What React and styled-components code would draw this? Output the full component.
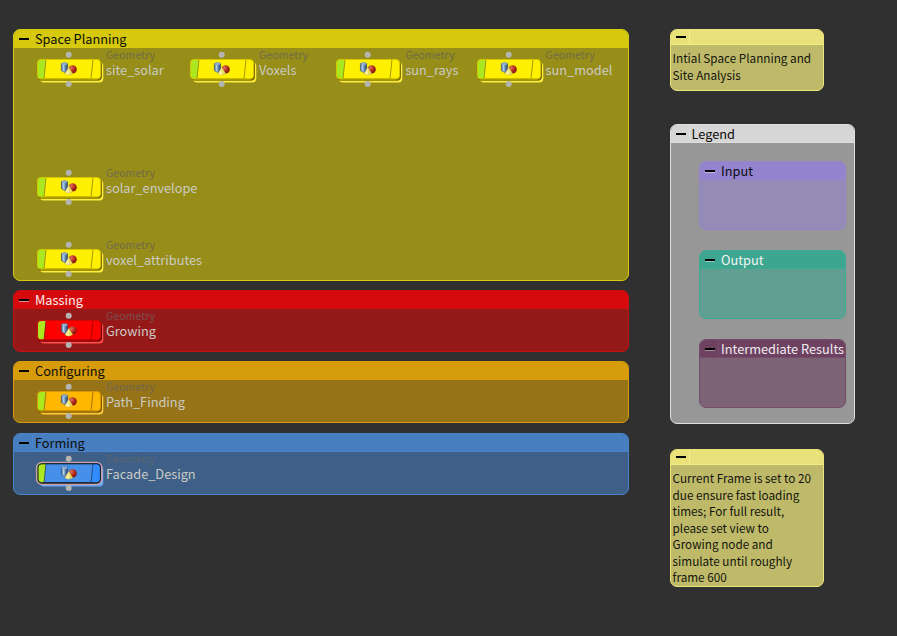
import React, { useId } from "react";
import styled, { createGlobalStyle } from "styled-components";

const GlobalStyle = createGlobalStyle`
  * { box-sizing: border-box; }
  body {
    margin: 0;
    background: #303030;
    font-family: "Noto Sans CJK SC", "Noto Sans", sans-serif;
  }
`;

const Canvas = styled.main`
  display: flex;
  align-items: flex-start;
  gap: 41px;
  width: 897px;
  height: 636px;
  padding: 29px 0 0 13px;
  background: #303030;
  overflow: hidden;
`;

const NetworkColumn = styled.div`
  display: flex;
  flex-direction: column;
  width: 615.6px;
`;

const NotesColumn = styled.div`
  display: flex;
  flex-direction: column;
  width: 185.3px;
`;

const Box = styled.section`
  width: ${(p) => (p.$width ? `${p.$width}px` : "100%")};
  height: ${(p) => p.$height}px;
  margin-top: ${(p) => p.$gap || 0}px;
  background: ${(p) => p.$fill};
  border: 1px solid ${(p) => p.$line};
  border-radius: 7px;
  overflow: hidden;
`;

const Header = styled.header`
  display: flex;
  height: ${(p) => p.$height || 18}px;
  background: ${(p) => p.$fill};
  border-bottom: 1px solid ${(p) => p.$line};
`;

const Toggle = styled.span`
  flex: none;
  width: 19px;
  border-right: 1px solid ${(p) => p.$line};

  &::before {
    content: "";
    display: block;
    width: 10px;
    height: 2px;
    margin: ${(p) => p.$top ?? 8}px 0 0 5px;
    background: #000;
    border-bottom: 1px solid ${(p) => p.$shade || "transparent"};
    background-clip: padding-box;
  }
`;

const Title = styled.h2`
  margin: -1px 0 0 2px;
  font-size: 12.75px;
  font-weight: 400;
  line-height: 19px;
  white-space: nowrap;
  color: ${(p) => p.$color || "#0c0c08"};
`;

const NodeGrid = styled.div`
  display: grid;
  grid-template-columns: 153px 146.4px 140.2px 1fr;
  grid-auto-rows: ${(p) => p.$row || 71.5}px;
  padding: 3px 0 0 22px;
`;

const NodeItem = styled.div`
  display: flex;
  gap: 2px;
  grid-column: ${(p) => p.$column || "auto"};
  grid-row: ${(p) => p.$row || "auto"};
`;

const NodeArt = styled.svg`
  flex: none;
  display: block;
  width: 68px;
  height: 37px;
  overflow: visible;
`;

const NodeText = styled.div`
  margin-top: -3px;
  white-space: nowrap;
`;

const NodeType = styled.div`
  font-size: 10.6px;
  line-height: 14px;
  color: ${(p) => p.$color};
`;

const NodeName = styled.div`
  font-size: 12.75px;
  line-height: 16px;
  color: #cbcbc4;
`;

const NoteText = styled.p`
  margin: 0;
  padding: 5px 0 0 2px;
  font-size: 11.72px;
  line-height: ${(p) => p.$leading || 16.5}px;
  white-space: pre-line;
  color: #14140c;
`;

const LegendBody = styled.div`
  display: flex;
  flex-direction: column;
  gap: 20.5px;
  padding: 18px 0 0 28.5px;
`;

const PALETTES = {
  yellow: { fill: "#fff000", edge: "#d6c400", dark: "#807400", back: "#ffec3c", cap: "#fff000", type: "#706a48" },
  red: { fill: "#ff0000", edge: "#d00808", dark: "#7c0000", back: "#ff4c4c", cap: "#ff0000", type: "#76504e" },
  orange: { fill: "#ffb700", edge: "#d49700", dark: "#805a00", back: "#ffc83c", cap: "#ffb700", type: "#72664c" },
  blue: { fill: "#4690ea", edge: "#10151c", dark: "#183452", back: "#6aa7f5", cap: "#318cff", type: "#5a6470" },
};

function NodeDrawing({ palette, selected }) {
  const id = useId();
  const blue = `${id}b`;
  const red = `${id}r`;
  const clip = `${id}c`;
  return (
    <NodeArt viewBox="0 0 68 37">
      <defs>
        <linearGradient id={blue}>
          <stop offset="0" stopColor="#4a6a92" />
          <stop offset=".35" stopColor="#b4cfe8" />
          <stop offset=".65" stopColor="#5a80ac" />
          <stop offset="1" stopColor="#203f67" />
        </linearGradient>
        <radialGradient id={red} cx=".35" cy=".3" r=".8">
          <stop offset="0" stopColor="#dc7460" />
          <stop offset=".5" stopColor="#b42b1b" />
          <stop offset="1" stopColor="#701006" />
        </radialGradient>
        <clipPath id={clip}>
          <rect x="1.5" y="8.5" width="63" height="19" rx="3.5" />
        </clipPath>
      </defs>
      <rect x="4" y="11" width="63.3" height="20.6" rx="4" fill={palette.back} />
      {!selected && <rect x="2" y="9.5" width="64" height="20.3" rx="4" fill={palette.dark} />}
      {selected && (
        <rect x="0.7" y="7.5" width="65" height="21.7" rx="5" fill="#10151c" stroke="#cfa0a6" strokeWidth="1.6" />
      )}
      <g clipPath={`url(#${clip})`}>
        <rect x="1" y="8" width="64" height="20" fill={palette.fill} />
        <path d="M1 8H10L8 28H1Z" fill="#ace820" />
        <path d="M57 8H65V28H55Z" fill={palette.cap} />
        <path d="M10 8.5L8 28M57 8.5L55 28" stroke={palette.dark} strokeWidth=".7" />
      </g>
      <rect
        x={selected ? 2 : 1.5}
        y={selected ? 8.8 : 8.5}
        width={selected ? 62.4 : 63}
        height={selected ? 19.1 : 19.5}
        rx="3.5"
        fill="none"
        stroke={palette.edge}
        strokeWidth="1"
      />
      <path d="M25.4 12.6Q28.5 10.8 31.6 12.6V20.5Q29.2 23 25.4 19.6Z" fill={`url(#${blue})`} stroke="#355078" strokeWidth=".6" />
      <ellipse cx="28.5" cy="12.7" rx="3" ry="1.2" fill="#8facca" />
      <circle cx="36.6" cy="18.4" r="4.2" fill={`url(#${red})`} />
      <path d="M32.9 16.2L36.8 22.8Q32.7 25.6 28.8 22.8Z" fill="#eadb62" stroke="#a99433" strokeWidth=".3" />
      <path d="M32.8 16.6L32.8 23.9Q30.7 23.9 29.5 22.8Z" fill="#faf0a4" />
      <circle cx="32.7" cy="3.8" r="3" fill="#b4b4b0" />
      <circle cx="32.7" cy="33" r="3" fill="#b4b4b0" />
    </NodeArt>
  );
}

function Node({ name, color, selected, column, row }) {
  const palette = PALETTES[color];
  return (
    <NodeItem $column={column} $row={row}>
      <NodeDrawing palette={palette} selected={selected} />
      <NodeText>
        <NodeType $color={palette.type}>Geometry</NodeType>
        <NodeName>{name}</NodeName>
      </NodeText>
    </NodeItem>
  );
}

function NetworkBox({ title, titleColor, head, line, fill, height, gap, width, shade, children }) {
  return (
    <Box $height={height} $gap={gap} $width={width} $fill={fill} $line={line}>
      <Header $fill={head} $line={line}>
        <Toggle $line={line} $shade={shade} />
        <Title $color={titleColor}>{title}</Title>
      </Header>
      {children}
    </Box>
  );
}

function StickyNote({ height, gap, leading, children }) {
  return (
    <Box $width={154.6} $height={height} $gap={gap} $fill="#beba6a" $line="#ede57b">
      <Header $height={15} $fill="#e9e27a" $line="#f3ea80">
        <Toggle $line="#f5ef90" $top={6} />
      </Header>
      <NoteText $leading={leading}>{children}</NoteText>
    </Box>
  );
}

export default function App() {
  return (
    <>
      <GlobalStyle />
      <Canvas>
        <NetworkColumn>
          <NetworkBox title="Space Planning" head="#d6c80c" line="#d8ca10" fill="#978e19" height={252}>
            <NodeGrid $row={115}>
              <Node name="site_solar" color="yellow" column={1} row={1} />
              <Node name="Voxels" color="yellow" column={2} row={1} />
              <Node name="sun_rays" color="yellow" column={3} row={1} />
              <Node name="sun_model" color="yellow" column={4} row={1} />
            </NodeGrid>
            <NodeGrid $row={71.5}>
              <Node name="solar_envelope" color="yellow" column={1} row={1} />
              <Node name="voxel_attributes" color="yellow" column={1} row={2} />
            </NodeGrid>
          </NetworkBox>
          <NetworkBox title="Massing" titleColor="#f6eeee" head="#d60a0c" line="#c80f11" fill="#961919" height={62} gap={9} shade="#e58a8a">
            <NodeGrid>
              <Node name="Growing" color="red" />
            </NodeGrid>
          </NetworkBox>
          <NetworkBox title="Configuring" head="#d69c0c" line="#d69c0c" fill="#967317" height={62} gap={9}>
            <NodeGrid>
              <Node name="Path_Finding" color="orange" />
            </NodeGrid>
          </NetworkBox>
          <NetworkBox title="Forming" head="#467ec0" line="#4684cc" fill="#3e6088" height={62} gap={10}>
            <NodeGrid>
              <Node name="Facade_Design" color="blue" selected />
            </NodeGrid>
          </NetworkBox>
        </NetworkColumn>
        <NotesColumn>
          <StickyNote height={62}>{"Intial Space Planning and\nSite Analysis"}</StickyNote>
          <NetworkBox title="Legend" head="#d6d6d6" line="#dedede" fill="#979797" height={299.5} gap={33}>
            <LegendBody>
              <NetworkBox title="Input" head="#9484d0" line="#9484ce" fill="#958bb7" height={68.5} width={146.5} shade="#c6bae5" />
              <NetworkBox title="Output" titleColor="#f2f5f3" head="#3ea690" line="#3dab93" fill="#609f92" height={68.5} width={146.5} shade="#91c9bd" />
              <NetworkBox title="Intermediate Results" titleColor="#f2eaf0" head="#6d4261" line="#764c6b" fill="#7d6376" height={68.5} width={146.5} shade="#aa8da1" />
            </LegendBody>
          </NetworkBox>
          <StickyNote height={138} gap={25.5} leading={16.5}>
            {"Current Frame is set to 20\ndue ensure fast loading\ntimes; For full result,\nplease set view to\nGrowing node and\nsimulate until roughly\nframe 600"}
          </StickyNote>
        </NotesColumn>
      </Canvas>
    </>
  );
}
